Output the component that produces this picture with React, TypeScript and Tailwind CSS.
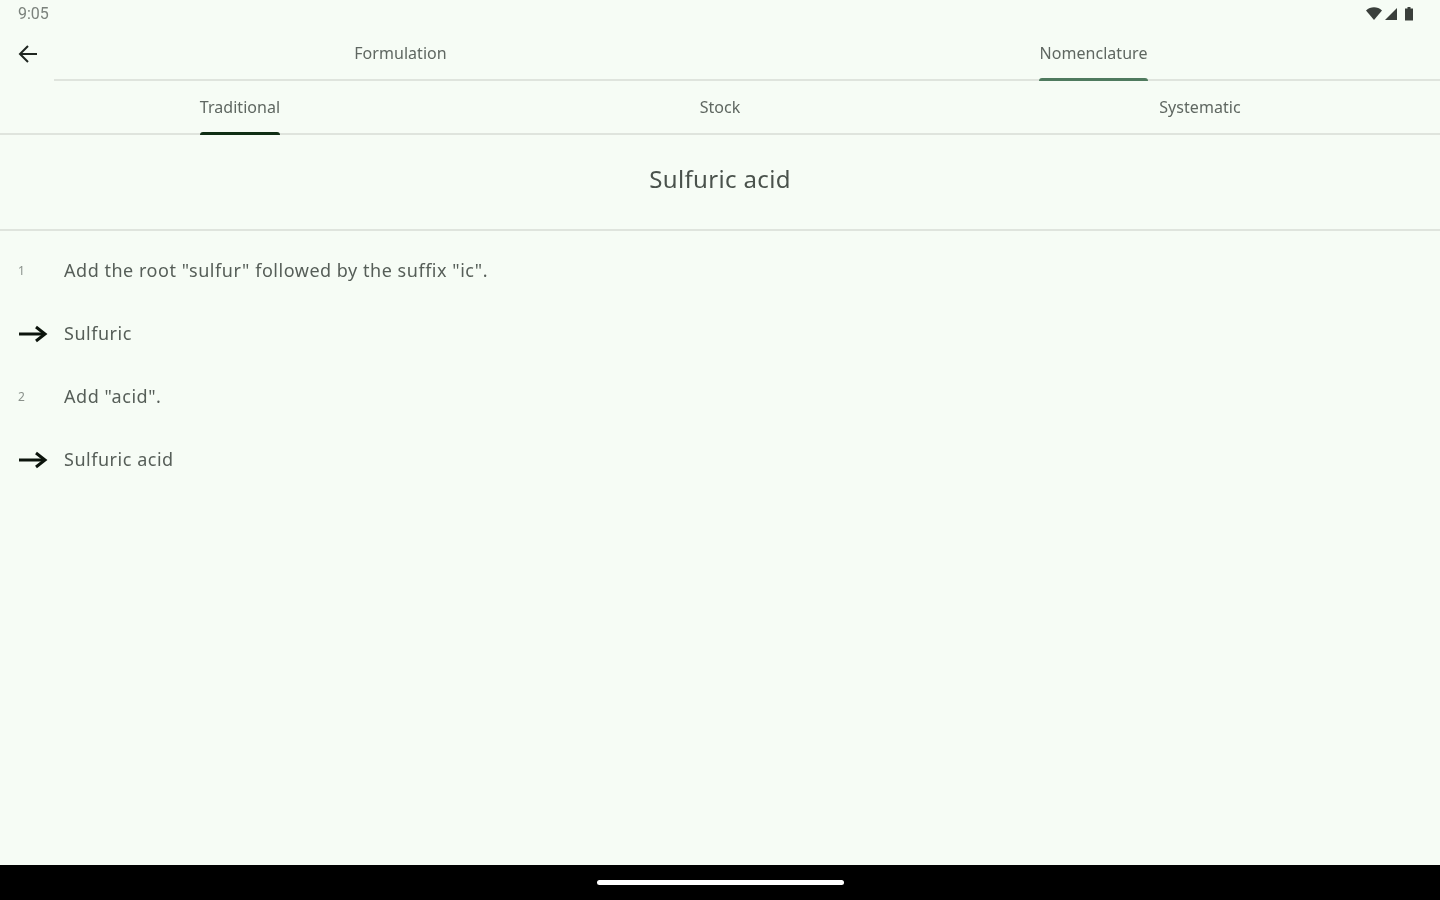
import React from "react";

function Arrow() {
  return (
    <svg width="30" height="20" viewBox="0 0 30 20" fill="none" stroke="#0c140c" strokeWidth="3" className="shrink-0">
      <path d="M1 10H27" />
      <path d="M18 3L27 10L18 17" />
    </svg>
  );
}

function Tab({ label, active, color }: { label: string; active?: boolean; color?: string }) {
  return (
    <div className="flex-1 flex justify-center h-full">
      <div className="relative h-full flex items-center text-[16px] tracking-[0.05px] text-[#5f6761]">
        {label}
        {active && (
          <div className={"absolute left-0 right-0 bottom-[-2px] h-[3px] rounded-t-[3px] " + color} />
        )}
      </div>
    </div>
  );
}

function Step({ marker, text }: { marker: React.ReactNode; text: string }) {
  return (
    <div className="h-[63px] flex items-center pl-[18px]">
      <div className="w-[46px] shrink-0 flex items-center">{marker}</div>
      <div className="text-[18px] tracking-[0.53px] text-[#565e58]">{text}</div>
    </div>
  );
}

export default function App() {
  return (
    <div className="w-[1440px] h-[900px] overflow-hidden flex flex-col bg-[#f6fcf5] font-['Noto_Sans',sans-serif] blur-[0.7px]">
      <div className="h-[27px] shrink-0 flex items-center justify-between pl-[18px] pr-[25px]">
        <span className="text-[16px] text-[#7b827c] font-['Roboto',sans-serif]">9:05</span>
        <div className="flex items-center gap-[3px]">
          <svg width="16" height="14" viewBox="0 0 16 14" fill="#3a3f3b"><path d="M0 3.5C4.5-.7 11.5-.7 16 3.5L8 13Z" /></svg>
          <svg width="12" height="12" viewBox="0 0 12 12" fill="#3a3f3b"><path d="M12 0V12H0Z" /></svg>
          <svg width="12" height="14" viewBox="0 0 12 14" fill="#3a3f3b" className="ml-[3px]"><path d="M4.5 0h3v1.5H10V13.5H2V1.5H4.5Z" /></svg>
        </div>
      </div>

      <div className="h-[54px] shrink-0 flex">
        <div className="w-[54px] shrink-0 flex items-center pl-[16px]">
          <svg width="24" height="24" viewBox="0 0 24 24" fill="none" stroke="#1f2620" strokeWidth="2">
            <path d="M21 12H4" />
            <path d="M12 4L4 12L12 20" />
          </svg>
        </div>
        <div className="flex-1 flex border-b-2 border-[#dfe4dd]">
          <Tab label="Formulation" />
          <Tab label="Nomenclature" active color="bg-[#4f7a5e]" />
        </div>
      </div>

      <div className="h-[54px] shrink-0 flex border-b-2 border-[#dfe4dd]">
        <Tab label="Traditional" active color="bg-[#0f2e14]" />
        <Tab label="Stock" />
        <Tab label="Systematic" />
      </div>

      <div className="h-[96px] shrink-0 flex items-center justify-center pb-[6px] border-b-2 border-[#dfe4dd] text-[24px] tracking-[0.35px] text-[#4a524c]">
        Sulfuric acid
      </div>

      <div className="flex-1 pt-[8px]">
        <Step marker={<span className="text-[12px] text-[#8a918b]">1</span>} text={'Add the root "sulfur" followed by the suffix "ic".'} />
        <Step marker={<Arrow />} text="Sulfuric" />
        <Step marker={<span className="text-[12px] text-[#8a918b]">2</span>} text={'Add "acid".'} />
        <Step marker={<Arrow />} text="Sulfuric acid" />
      </div>

      <div className="h-[35px] shrink-0 bg-black flex justify-center items-start pt-[15px]">
        <div className="w-[247px] h-[5px] rounded-full bg-white" />
      </div>
    </div>
  );
}
